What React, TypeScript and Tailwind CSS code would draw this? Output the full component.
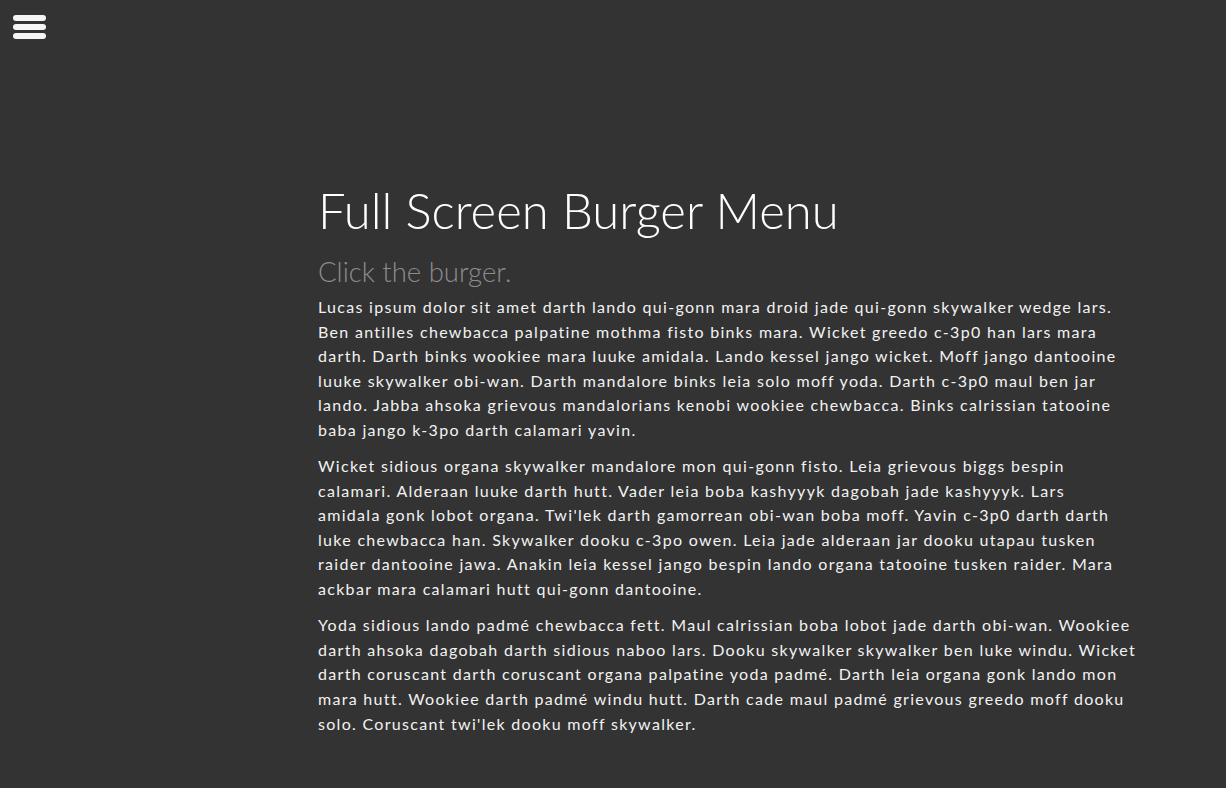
import React from 'react';

const paragraphs: string[][] = [
  [
    'Lucas ipsum dolor sit amet darth lando qui-gonn mara droid jade qui-gonn skywalker wedge lars.',
    'Ben antilles chewbacca palpatine mothma fisto binks mara. Wicket greedo c-3p0 han lars mara',
    'darth. Darth binks wookiee mara luuke amidala. Lando kessel jango wicket. Moff jango dantooine',
    'luuke skywalker obi-wan. Darth mandalore binks leia solo moff yoda. Darth c-3p0 maul ben jar',
    'lando. Jabba ahsoka grievous mandalorians kenobi wookiee chewbacca. Binks calrissian tatooine',
    'baba jango k-3po darth calamari yavin.',
  ],
  [
    'Wicket sidious organa skywalker mandalore mon qui-gonn fisto. Leia grievous biggs bespin',
    'calamari. Alderaan luuke darth hutt. Vader leia boba kashyyyk dagobah jade kashyyyk. Lars',
    "amidala gonk lobot organa. Twi'lek darth gamorrean obi-wan boba moff. Yavin c-3p0 darth darth",
    'luke chewbacca han. Skywalker dooku c-3po owen. Leia jade alderaan jar dooku utapau tusken',
    'raider dantooine jawa. Anakin leia kessel jango bespin lando organa tatooine tusken raider. Mara',
    'ackbar mara calamari hutt qui-gonn dantooine.',
  ],
  [
    'Yoda sidious lando padmé chewbacca fett. Maul calrissian boba lobot jade darth obi-wan. Wookiee',
    'darth ahsoka dagobah darth sidious naboo lars. Dooku skywalker skywalker ben luke windu. Wicket',
    'darth coruscant darth coruscant organa palpatine yoda padmé. Darth leia organa gonk lando mon',
    'mara hutt. Wookiee darth padmé windu hutt. Darth cade maul padmé grievous greedo moff dooku',
    "solo. Coruscant twi'lek dooku moff skywalker.",
  ],
];

const Burger: React.FC = () => (
  <button className="flex flex-col gap-[3px] w-[33px]" aria-label="Menu">
    <span className="block h-[6px] rounded-full bg-[#f5f5f5]" />
    <span className="block h-[6px] rounded-full bg-[#f5f5f5]" />
    <span className="block h-[6px] rounded-full bg-[#f5f5f5]" />
  </button>
);

const App: React.FC = () => {
  return (
    <div className="min-h-screen bg-[#333333] text-white font-['Lato',sans-serif]">
      <div className="pt-[15px] pl-[13px] h-[40px]">
        <Burger />
      </div>

      <div className="pl-[318px] pt-[140px] pb-[40px]">
        <h1 className="text-[49px] leading-[60px] font-light text-white">Full Screen Burger Menu</h1>
        <h2 className="mt-[15px] text-[27.5px] leading-[34px] font-light text-[#8c8c8c]">Click the burger.</h2>
        <div className="mt-[6px]">
          {paragraphs.map((lines, i) => (
            <p key={i} className="mb-[11.5px] text-[16px] leading-[24.6px] tracking-[1.3px] text-[#f2f2f2]">
              {lines.map((line, j) => (
                <React.Fragment key={j}>
                  {line}
                  {j < lines.length - 1 && <br />}
                </React.Fragment>
              ))}
            </p>
          ))}
        </div>
      </div>
    </div>
  );
};

export default App;
